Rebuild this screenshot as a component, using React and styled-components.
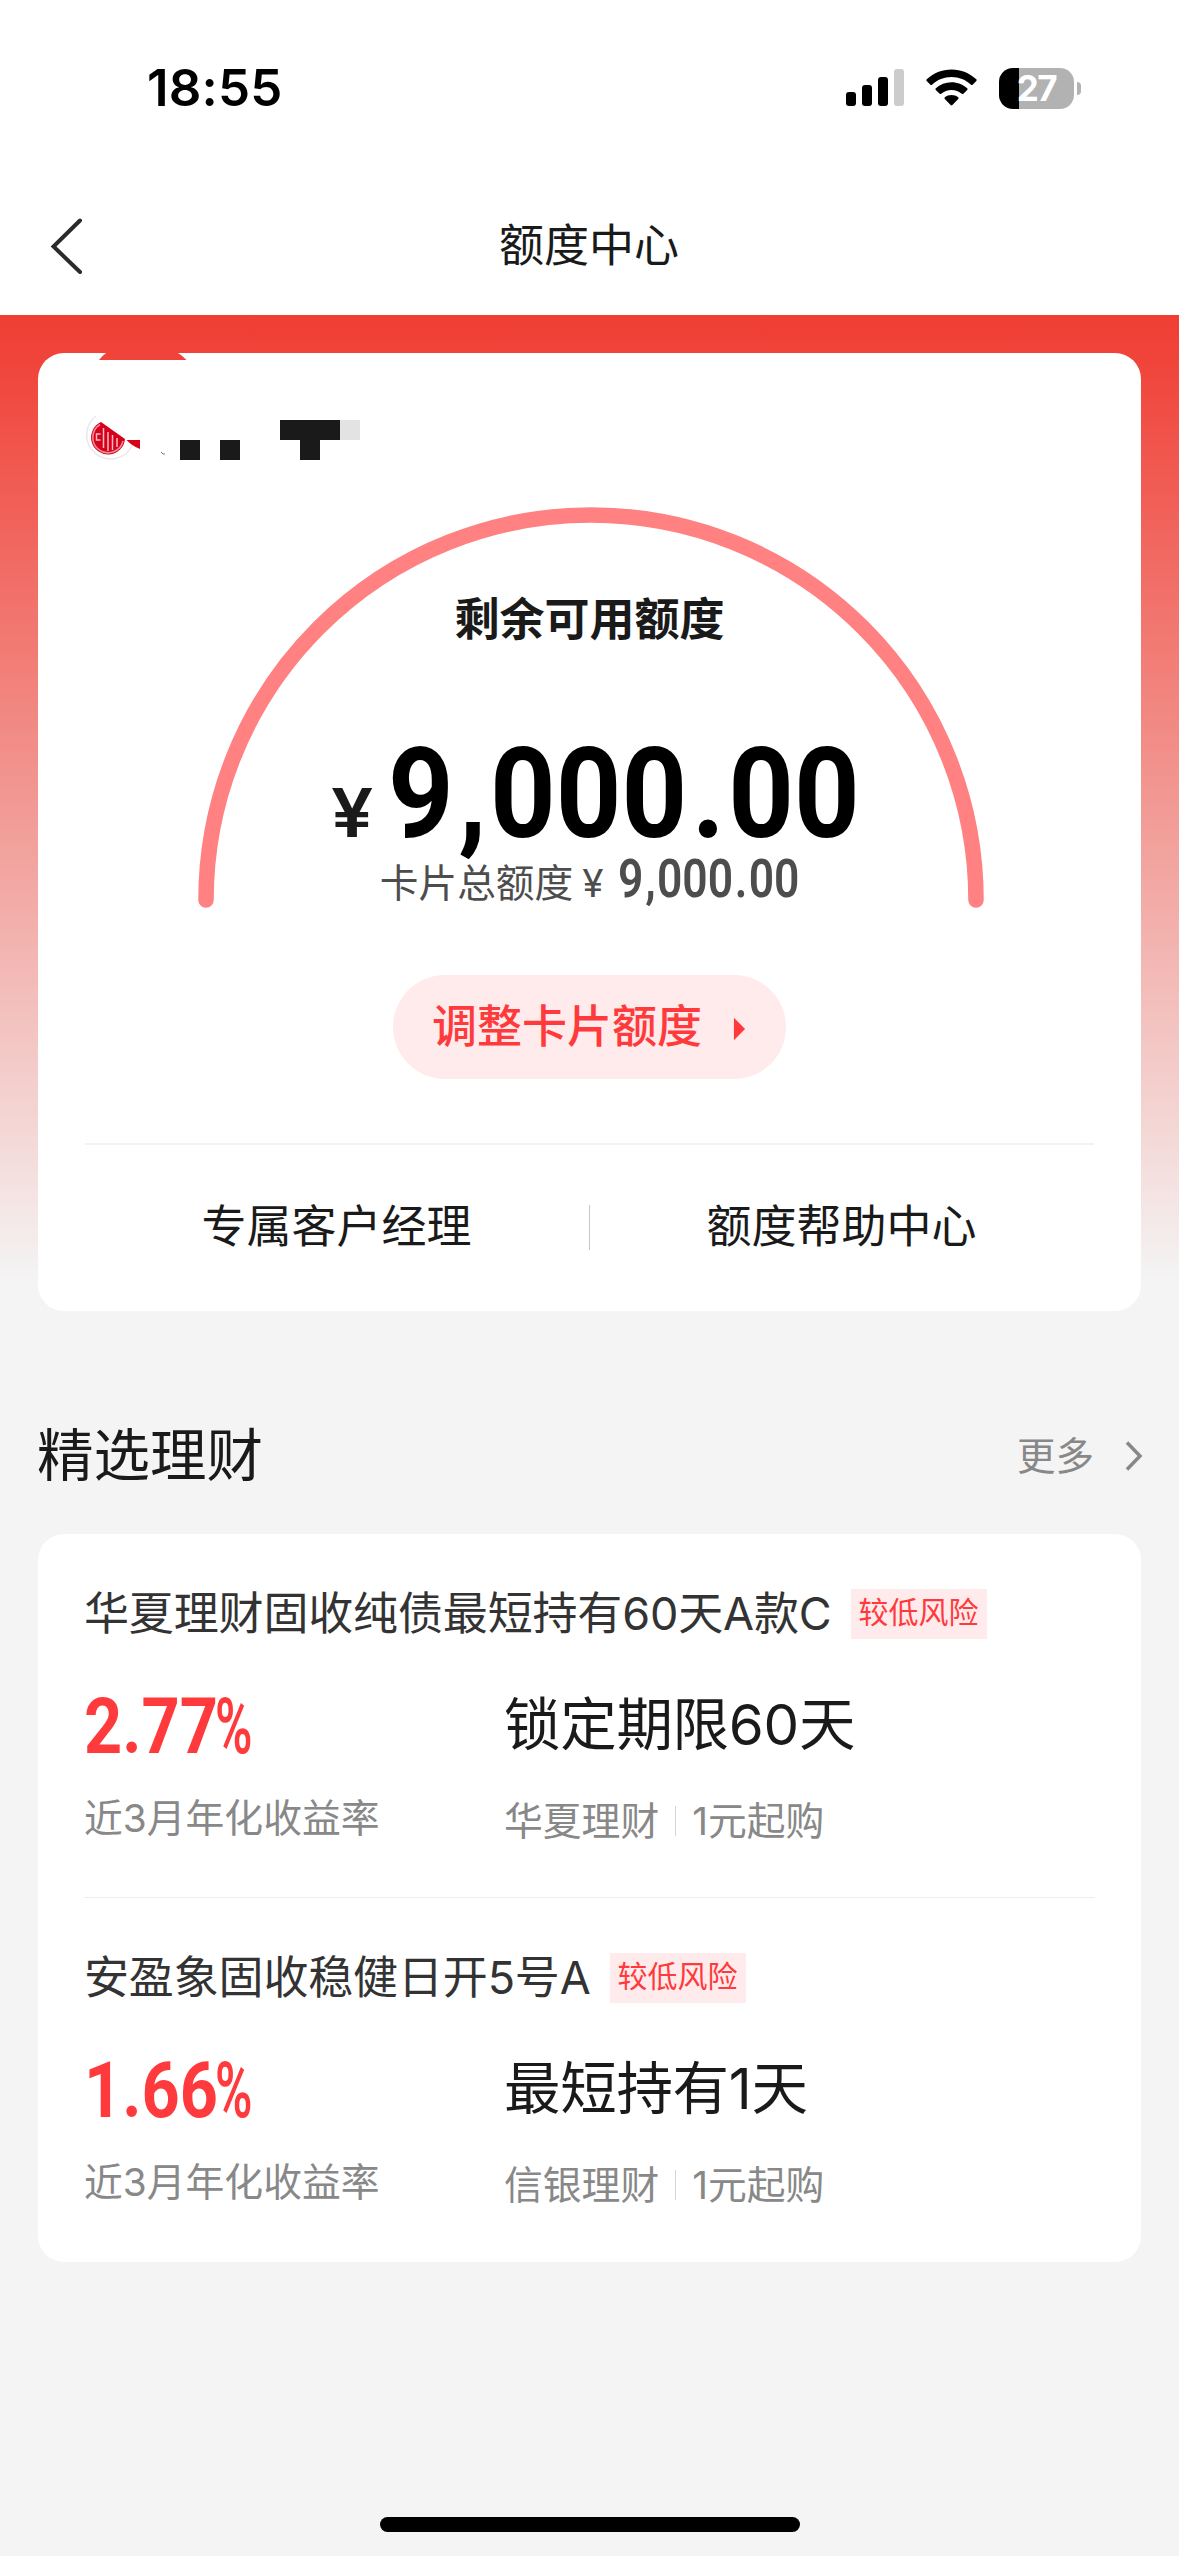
import React from "react";
import styled, { createGlobalStyle } from "styled-components";

const GlobalStyle = createGlobalStyle`
  * {
    box-sizing: border-box;
  }

  body {
    margin: 0;
    background: #f4f4f4;
    color: #1a1a1a;
    font-family: Inter, "Noto Sans CJK SC", sans-serif;
  }

  svg {
    display: block;
  }
`;

const Page = styled.div`
  display: flex;
  flex-direction: column;
  width: 1179px;
  height: 2556px;
  overflow: hidden;
`;

/* 状态栏 */
const StatusBar = styled.div`
  display: flex;
  align-items: center;
  justify-content: space-between;
  height: 176px;
  padding: 0 98px 0 147px;
  background: #fff;
`;

const Time = styled.span`
  font-size: 51px;
  font-weight: 600;
  line-height: 60px;
  letter-spacing: 0.2px;
  color: #000;
`;

const StatusIcons = styled.div`
  display: flex;
  align-items: center;
  gap: 22px;
`;

const Battery = styled.div`
  display: flex;
  align-items: center;
  gap: 3px;
`;

const BatteryBody = styled.div`
  display: flex;
  align-items: center;
  justify-content: center;
  width: 75px;
  height: 41px;
  border-radius: 14px;
  background: linear-gradient(to right, #000 20px, #b2b2b2 20px);
  font-size: 35px;
  font-weight: 700;
  line-height: 41px;
  letter-spacing: -1.5px;
  color: #fff;
`;

const BatteryCap = styled.div`
  width: 4px;
  height: 13px;
  border-radius: 0 5px 5px 0;
  background: #b2b2b2;
`;

/* 导航栏 */
const NavBar = styled.header`
  display: grid;
  grid-template-columns: 120px 1fr 120px;
  align-items: center;
  height: 139px;
  background: #fff;
`;

const BackButton = styled.div`
  padding-left: 50px;
`;

const NavTitle = styled.h1`
  margin: 0;
  font-size: 45px;
  font-weight: 400;
  line-height: 60px;
  text-align: center;
  text-indent: -1px;
`;

/* 额度卡片 */
const Hero = styled.section`
  height: 996px;
  padding: 38px 38px 0;
  background: linear-gradient(to bottom, #f03e33 0, #f0443a 45px, #f4f4f4 965px);
`;

const QuotaCard = styled.div`
  display: flex;
  flex-direction: column;
  align-items: center;
  height: 958px;
  padding: 0 47px;
  border-radius: 26px;
  background: #fff;
`;

const BrandRow = styled.div`
  align-self: flex-start;
  height: 112px;
`;

const Gauge = styled.div`
  display: grid;
  width: 788px;
  height: 403px;
  margin-top: 42px;

  & > * {
    grid-area: 1 / 1;
  }
`;

const GaugeText = styled.div`
  display: flex;
  flex-direction: column;
  align-items: center;
  padding-top: 83px;
`;

const GaugeLabel = styled.div`
  font-size: 45px;
  font-weight: 600;
  line-height: 60px;
`;

const AmountRow = styled.div`
  display: flex;
  align-items: baseline;
  margin: 94px 0 0 6px;
  line-height: 100px;
  color: #000;
`;

const Currency = styled.span`
  width: 57px;
  font-size: 67px;
  font-weight: 600;
  color: #1a1a1a;
  transform: scaleX(1.12);
  transform-origin: left center;
`;

const TotalRow = styled.div`
  display: flex;
  align-items: baseline;
  margin-top: -9px;
  font-size: 38.7px;
  line-height: 50px;
  color: #4d4d4d;
`;

const TotalCurrency = styled.span`
  width: 36px;
  margin-left: 9px;
`;

const Digits = styled.span`
  display: inline-block;
  width: ${({ $width }) => $width}px;
  font-family: Roboto, sans-serif;
  font-size: ${({ $size }) => $size}px;
  font-weight: ${({ $weight }) => $weight || 700};
  white-space: nowrap;
  transform: scaleX(${({ $scale }) => $scale});
  transform-origin: left center;
`;

const Mark = styled.span`
  margin: 0 0.03em 0 0.04em;
`;

const AdjustButton = styled.button`
  display: flex;
  align-items: center;
  width: 393px;
  height: 104px;
  margin: 65px 0 64px;
  padding: 0 40px 1px 39px;
  border: none;
  border-radius: 52px;
  background: #ffebeb;
  font-family: inherit;
  font-size: 45px;
  font-weight: 500;
  line-height: 60px;
  white-space: nowrap;
  color: #ff3a3c;

  svg {
    margin: 5px 0 0 31px;
  }
`;

const Line = styled.div`
  width: 1009px;
  height: 2px;
  background: #f3f3f3;
`;

const LinkRow = styled.div`
  display: grid;
  grid-template-columns: 1fr 1px 1fr;
  align-items: center;
  width: 1009px;
  height: 164px;
`;

const CardLink = styled.div`
  font-size: 45px;
  line-height: 60px;
  text-align: center;
  text-indent: -1px;
`;

const LinkDivider = styled.div`
  width: 1px;
  height: 45px;
  background: #c8c8c8;
`;

/* 精选理财 */
const SectionHeader = styled.div`
  display: flex;
  align-items: center;
  justify-content: space-between;
  height: 60px;
  margin: 115px 36px 48px 37px;
`;

const SectionTitle = styled.h2`
  margin: 0;
  font-size: 56.5px;
  font-weight: 400;
  line-height: 60px;
`;

const More = styled.div`
  display: flex;
  align-items: center;
  gap: 31px;
  font-size: 38.5px;
  line-height: 50px;
  color: #888;
`;

const ProductList = styled.div`
  margin: 0 38px;
  padding: 0 46px;
  border-radius: 26px;
  background: #fff;
`;

const Product = styled.article`
  height: 364px;
  padding-top: 54px;

  & + & {
    box-shadow: 0 -1px 0 #ededed;
  }
`;

const ProductHead = styled.div`
  display: flex;
  align-items: center;
  gap: 19px;
  height: 51px;
`;

const ProductName = styled.div`
  font-size: 45px;
  line-height: 51px;
  letter-spacing: -0.15px;
  color: #333;
`;

const RiskTag = styled.div`
  width: 136px;
  height: 50px;
  background: #ffebeb;
  font-size: 30px;
  line-height: 46px;
  text-align: center;
  color: #ff3a3c;
`;

const ProductBody = styled.div`
  display: grid;
  grid-template-columns: 420px 1fr;
  margin-top: 56px;
`;

const Rate = styled.div`
  display: flex;
  height: 60px;
  padding-top: 2px;
  line-height: 60px;
  color: #ff3a3c;
`;

const Term = styled.div`
  font-size: 56.5px;
  line-height: 59px;
  letter-spacing: -0.3px;
`;

const Note = styled.div`
  display: flex;
  align-items: center;
  margin-top: ${({ $gap }) => $gap}px;
  font-size: 38.8px;
  line-height: 44px;
  color: #888;
`;

const NoteDivider = styled.span`
  width: 1px;
  height: 30px;
  margin: 0 16px 0 16px;
  background: #d6d6d6;
`;

const HomeIndicator = styled.div`
  width: 420px;
  height: 15px;
  margin: auto auto 24px;
  border-radius: 8px;
  background: #000;
`;

const SignalIcon = () => (
  <svg width="58" height="38" viewBox="0 0 58 38">
    <rect x="0" y="23" width="10" height="14" rx="3" />
    <rect x="16" y="16" width="10" height="21" rx="3" />
    <rect x="32" y="8" width="10" height="29" rx="3" />
    <rect x="48" y="0" width="10" height="37" rx="3" fill="#ccc" />
  </svg>
);

const WifiIcon = () => (
  <svg width="51" height="38" viewBox="0 0 51 38">
    <path d="M25.5 0.5C35 0.5 43.8 4.2 50.3 10.3c.5.5.5 1.2 0 1.7L46.6 15.7c-.4.4-1.1.4-1.6 0C39.8 10.8 32.9 8 25.5 8S11.2 10.8 6 15.7c-.5.4-1.2.4-1.6 0L.7 12c-.5-.5-.5-1.2 0-1.7C7.2 4.2 16 .5 25.5.5Z" />
    <path d="M25.5 13.3c6 0 11.5 2.3 15.7 6 .5.5.5 1.2 0 1.7l-3.8 3.8c-.4.4-1.1.4-1.6 0-2.8-2.4-6.4-3.9-10.3-3.9s-7.5 1.5-10.3 3.9c-.5.4-1.2.4-1.6 0L9.8 21c-.5-.5-.5-1.2 0-1.7 4.2-3.7 9.7-6 15.7-6Z" />
    <path d="M25.5 26c2.5 0 4.8.9 6.6 2.3.5.4.5 1.1.1 1.6l-5.8 6.1c-.5.5-1.3.5-1.8 0l-5.8-6.1c-.4-.5-.4-1.2.1-1.6C20.7 26.9 23 26 25.5 26Z" />
  </svg>
);

const BrandMark = () => (
  <svg width="300" height="112" viewBox="0 0 300 112">
    <path d="M21 0H93Q98 3 101.500 7H14Q17 3 21 0Z" fill="#f0443a" />
    {/* 圆形行徽 */}
    <path d="M11 63A24 24 0 1 0 47 93" fill="none" stroke="#e9e9ec" strokeWidth="1.5" />
    <path d="M16 69A17 17 0 1 0 40 86Z" fill="#d7001b" />
    <path d="M15 71.500A15.300 15.300 0 1 0 38 88" fill="none" stroke="#ef8e96" strokeWidth="1.500" />
    <g fill="none" stroke="#f7bcc1" strokeWidth="1.500">
      <path d="M15.500 81H11.500V87H15.500" />
      <path d="M18.500 75V95M23 79V98M27.500 82V97M32 85V94" />
    </g>
    <path d="M41.500 87H55V96Q47 93 41.500 87Z" fill="#d7001b" />
    <path d="M76 99L78 101H80" fill="none" stroke="#777" />
    {/* 卡号遮挡块 */}
    <g shapeRendering="crispEdges" fill="#1a1a1a">
      <rect x="95" y="87" width="20" height="20" />
      <rect x="135" y="87" width="20" height="20" />
      <rect x="195" y="67" width="60" height="20" />
      <rect x="215" y="87" width="20" height="20" />
      <rect x="255" y="67" width="20" height="20" fill="#e3e3e3" />
    </g>
  </svg>
);

const Amount = (props) => (
  <Digits {...props}>
    9<Mark>,</Mark>000<Mark>.</Mark>00
  </Digits>
);

const products = [
  {
    name: "华夏理财固收纯债最短持有60天A款C",
    rate: "2.77",
    term: "锁定期限60天",
    company: "华夏理财",
  },
  {
    name: "安盈象固收稳健日开5号A",
    rate: "1.66",
    term: "最短持有1天",
    company: "信银理财",
  },
];

const App = () => {
  return (
    <Page>
      <GlobalStyle />
      <StatusBar>
        <Time>18:55</Time>
        <StatusIcons>
          <SignalIcon />
          <WifiIcon />
          <Battery>
            <BatteryBody>27</BatteryBody>
            <BatteryCap />
          </Battery>
        </StatusIcons>
      </StatusBar>

      <NavBar>
        <BackButton>
          <svg width="34" height="56" viewBox="0 0 34 56" fill="none" stroke="#2b2b2b" strokeWidth="4">
            <path d="M30 2.500L3.500 28.500L30 54" strokeLinecap="round" />
          </svg>
        </BackButton>
        <NavTitle>额度中心</NavTitle>
      </NavBar>

      <Hero>
        <QuotaCard>
          <BrandRow>
            <BrandMark />
          </BrandRow>
          <Gauge>
            <svg width="788" height="403" viewBox="0 0 788 403" fill="none">
              <path d="M10 393A385 385 0 0 1 780 393" stroke="#ff8182" strokeWidth="15.500" strokeLinecap="round" />
            </svg>
            <GaugeText>
              <GaugeLabel>剩余可用额度</GaugeLabel>
              <AmountRow>
                <Currency>¥</Currency>
                <Amount $size={127} $width={466} $scale={0.902} />
              </AmountRow>
              <TotalRow>
                卡片总额度
                <TotalCurrency>¥</TotalCurrency>
                <Amount $size={53} $width={181} $scale={0.838} $weight={600} />
              </TotalRow>
            </GaugeText>
          </Gauge>
          <AdjustButton>
            调整卡片额度
            <svg width="14" height="26" viewBox="0 0 14 26">
              <path d="M1 1L13 13L1 25Z" fill="#ff3a3c" />
            </svg>
          </AdjustButton>
          <Line />
          <LinkRow>
            <CardLink>专属客户经理</CardLink>
            <LinkDivider />
            <CardLink>额度帮助中心</CardLink>
          </LinkRow>
        </QuotaCard>
      </Hero>

      <SectionHeader>
        <SectionTitle>精选理财</SectionTitle>
        <More>
          更多
          <svg width="18" height="32" viewBox="0 0 18 32" fill="none" stroke="#888" strokeWidth="3.500">
            <path d="M2 2.500L15 16L2 29.500" />
          </svg>
        </More>
      </SectionHeader>

      <ProductList>
        {products.map((item) => (
          <Product key={item.name}>
            <ProductHead>
              <ProductName>{item.name}</ProductName>
              <RiskTag>较低风险</RiskTag>
            </ProductHead>
            <ProductBody>
              <div>
                <Rate>
                  <Digits $size={77} $width={131} $scale={0.865}>
                    {item.rate}
                  </Digits>
                  <Digits $size={77} $width={36} $scale={0.66} $weight={600}>
                    %
                  </Digits>
                </Rate>
                <Note $gap={41}>近3月年化收益率</Note>
              </div>
              <div>
                <Term>{item.term}</Term>
                <Note $gap={45}>
                  {item.company}
                  <NoteDivider />
                  1元起购
                </Note>
              </div>
            </ProductBody>
          </Product>
        ))}
      </ProductList>

      <HomeIndicator />
    </Page>
  );
};

export default App;
